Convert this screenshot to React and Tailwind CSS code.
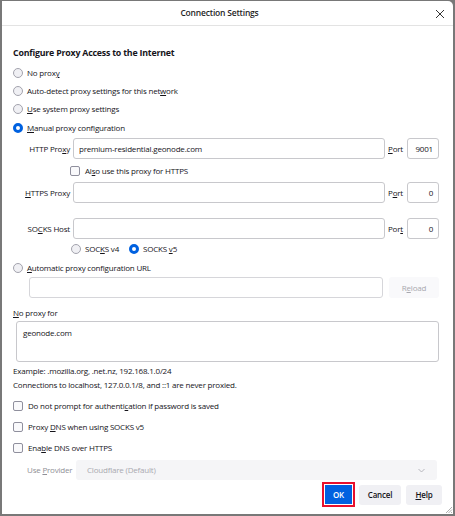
import React from "react";

const font = { fontFamily: '"Open Sans", "Noto Sans", sans-serif' };

function U({ children }) {
  return <span className="underline underline-offset-[1px]">{children}</span>;
}

function Radio({ checked }) {
  return checked ? (
    <span className="w-[10px] h-[10px] rounded-full border-[3px] border-[#0061e0] bg-white shrink-0" />
  ) : (
    <span className="w-[10px] h-[10px] rounded-full border border-[#a3a3ad] bg-[#f0f0f4] shrink-0" />
  );
}

function Check() {
  return <span className="w-[10px] h-[10px] rounded-[2px] border border-[#8f8f9d] bg-[#f9f9fb] shrink-0" />;
}

function RadioRow({ checked, children, className = "" }) {
  return (
    <div className={`flex items-center h-[18px] gap-[4px] ${className}`}>
      <Radio checked={checked} />
      <span>{children}</span>
    </div>
  );
}

function CheckRow({ children, className = "" }) {
  return (
    <div className={`flex items-center h-[16px] gap-[5px] ${className}`}>
      <Check />
      <span>{children}</span>
    </div>
  );
}

function ProxyRow({ label, value, port, portLabel, className = "" }) {
  return (
    <div className={`flex items-center h-[21px] ${className}`}>
      <div className="w-[57px] text-right whitespace-nowrap">{label}</div>
      <div className="ml-[3px] flex-1 h-full border border-[#c8c8cc] rounded-[3px] flex items-center px-[5px]">
        {value}
      </div>
      <div className="w-[19px] ml-[3px]">{portLabel}</div>
      <div className="w-[32px] h-full border border-[#c8c8cc] rounded-[3px] flex items-center justify-end px-[5px]">
        {port}
      </div>
    </div>
  );
}

export default function App() {
  return (
    <div className="w-[455px] h-[516px] bg-[#787878] pl-[2px] pt-[1px] pr-[2px] pb-[2px]" style={font}>
      <div className="w-full h-full bg-white rounded-tr-[5px] text-[8px] tracking-[-0.2px] text-[#15141a] flex flex-col">
        {/* title bar */}
        <div className="h-[25px] border-b border-[#e3e3e3] flex items-center justify-center pr-[16px] relative shrink-0">
          <span className="text-[8.5px] font-semibold text-[#1f1f1f]">Connection Settings</span>
          <svg className="absolute right-[8px] top-[8px]" width="10" height="10" viewBox="0 0 10 10">
            <path d="M1 1 L9 9 M9 1 L1 9" stroke="#333" strokeWidth="1" />
          </svg>
        </div>

        <div className="pl-[11px] pr-[14px] flex flex-col">
          <div className="h-[16px] mt-[20px] flex items-center font-bold text-[8.8px]">
            Configure Proxy Access to the Internet
          </div>
          <RadioRow className="mt-[2px]">No prox<U>y</U></RadioRow>
          <RadioRow>Auto-detect proxy settings for this net<U>w</U>ork</RadioRow>
          <RadioRow><U>U</U>se system proxy settings</RadioRow>
          <RadioRow checked className="mt-[1px]"><U>M</U>anual proxy configuration</RadioRow>

          <ProxyRow
            className="mt-[1px]"
            label={<>HTTP Pro<U>x</U>y</>}
            value="premium-residential.geonode.com"
            portLabel={<><U>P</U>ort</>}
            port="9001"
          />
          <div className="pl-[57px]">
            <CheckRow className="mt-[4px]">Al<U>s</U>o use this proxy for HTTPS</CheckRow>
          </div>
          <ProxyRow
            className="mt-[3px]"
            label={<><U>H</U>TTPS Proxy</>}
            value=""
            portLabel={<>P<U>o</U>rt</>}
            port="0"
          />
          <ProxyRow
            className="mt-[15px]"
            label={<>SO<U>C</U>KS Host</>}
            value=""
            portLabel={<>Por<U>t</U></>}
            port="0"
          />
          <div className="flex items-center h-[16px] mt-[2px] pl-[58px] gap-[4px]">
            <Radio />
            <span>SOC<U>K</U>S v4</span>
            <span className="ml-[6px] flex"><Radio checked /></span>
            <span>SOCKS <U>v</U>5</span>
          </div>

          <RadioRow className="mt-[2px]"><U>A</U>utomatic proxy configuration URL</RadioRow>
          <div className="flex h-[21px] pl-[16px] gap-[6px]">
            <div className="flex-1 border border-[#d6d6da] rounded-[3px]" />
            <div className="w-[50px] rounded-[3px] bg-[#f9f9fb] text-[#a8a8ae] flex items-center justify-center">
              R<U>e</U>load
            </div>
          </div>

          <div className="h-[14px] mt-[8px] flex items-center"><U>N</U>o proxy for</div>
          <div className="ml-[3px] h-[41px] mt-[1px] border border-[#c8c8cc] rounded-[3px] px-[6px] pt-[5px]">
            geonode.com
          </div>
          <div className="h-[14px] mt-[2px] flex items-center">Example: .mozilla.org, .net.nz, 192.168.1.0/24</div>
          <div className="h-[14px] flex items-center">Connections to localhost, 127.0.0.1/8, and ::1 are never proxied.</div>

          <CheckRow className="mt-[6px]">Do not prompt for authenti<U>c</U>ation if password is saved</CheckRow>
          <CheckRow className="mt-[5px]">Proxy <U>D</U>NS when using SOCKS v5</CheckRow>
          <CheckRow className="mt-[5px]">Ena<U>b</U>le DNS over HTTPS</CheckRow>

          <div className="flex items-center h-[20px] mt-[4px] pl-[14px]">
            <span className="w-[49px] whitespace-nowrap text-[#8f8f96]">Use <U>P</U>rovider</span>
            <div className="flex-1 h-full rounded-[3px] bg-[#f5f5f7] flex items-center justify-between pl-[11px] pr-[12px] text-[#a9a9b0] mr-[2px]">
              <span>Cloudflare (Default)</span>
              <svg width="7" height="5" viewBox="0 0 7 5">
                <path d="M0.5 1 L3.5 4 L6.5 1" stroke="#b0b0b6" strokeWidth="0.9" fill="none" />
              </svg>
            </div>
          </div>

          <div className="flex items-center justify-end h-[25px] mt-[2px] mr-[-3px] gap-[4px]">
            <div className="w-[33px] h-[25px] border-2 border-[#e8112d] p-[1px]">
              <div className="w-full h-full bg-[#0061e0] text-white font-semibold flex items-center justify-center">
                OK
              </div>
            </div>
            <div className="w-[42px] h-[20px] rounded-[3px] bg-[#f0f0f4] font-semibold flex items-center justify-center">
              Cancel
            </div>
            <div className="w-[36px] h-[20px] ml-[1px] rounded-[3px] bg-[#f0f0f4] font-semibold flex items-center justify-center">
              <span><U>H</U>elp</span>
            </div>
          </div>
        </div>
        <div className="flex-1 relative">
          <svg className="absolute right-0 bottom-0" width="8" height="8" viewBox="0 0 8 8">
            <path d="M7 1 L1 7 M7 3.5 L3.5 7 M7 6 L6 7" stroke="#9a9a9a" strokeWidth="0.8" />
          </svg>
        </div>
      </div>
    </div>
  );
}
